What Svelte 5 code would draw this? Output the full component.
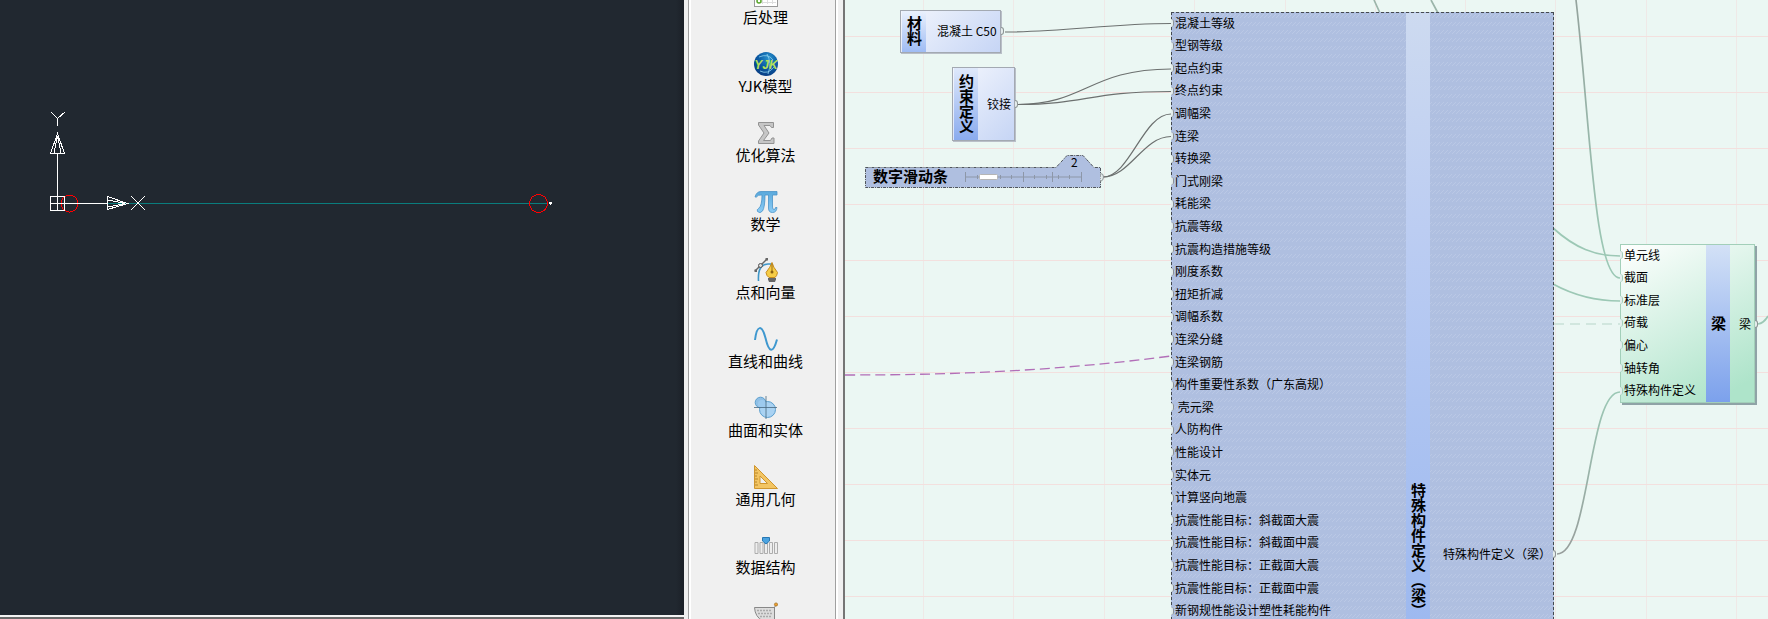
<script>
  const tools = [
    { id: 'post', label: '后处理' },
    { id: 'yjk', label: 'YJK模型' },
    { id: 'sigma', label: '优化算法' },
    { id: 'pi', label: '数学' },
    { id: 'pen', label: '点和向量' },
    { id: 'wave', label: '直线和曲线' },
    { id: 'solid', label: '曲面和实体' },
    { id: 'ruler', label: '通用几何' },
    { id: 'data', label: '数据结构' },
    { id: 'cart', label: '' }
  ];

  const beamInputs = [
    '混凝土等级', '型钢等级', '起点约束', '终点约束', '调幅梁', '连梁', '转换梁', '门式刚梁', '耗能梁',
    '抗震等级', '抗震构造措施等级', '刚度系数', '扭矩折减', '调幅系数', '连梁分缝', '连梁钢筋',
    '构件重要性系数（广东高规）', ' 壳元梁', '人防构件', '性能设计', '实体元', '计算竖向地震',
    '抗震性能目标：斜截面大震', '抗震性能目标：斜截面中震', '抗震性能目标：正截面大震',
    '抗震性能目标：正截面中震', '新钢规性能设计塑性耗能构件'
  ];

  const memberInputs = ['单元线', '截面', '标准层', '荷载', '偏心', '轴转角', '特殊构件定义'];

  const gridX = [78, 168, 259, 349, 440, 530, 620, 710, 801, 891];
  const gridY = [36, 92, 148, 204, 260, 316, 372, 428, 484, 540, 596];
  const ticks = [12, 23, 29, 35, 46, 58, 69, 81, 87, 93, 104];
</script>

<main class="app">
  <section class="cad" aria-label="CAD">
    <svg class="drawing" width="684" height="615" fill="none" shape-rendering="crispEdges">
      <path d="M107 203.5H548" stroke="#0a7d7d" />
      <g stroke="#f00">
        <circle cx="69.5" cy="203.5" r="8.5" />
        <circle cx="538.5" cy="203.5" r="9" />
      </g>
      <g stroke="#fff">
        <path d="M57.5 203V153M57 203.5H107" />
        <path d="M50.5 196.5h14v14h-14zM57.5 196v14M50 203.5h14" />
        <path d="M57.5 133.5L50.5 153.5H64.5ZM57.5 136L54 153M57.5 136L61 153" />
        <path d="M127.5 203.5L107.5 196.5V209.5ZM125 203.5L108 200M125 203.5L108 207" />
        <path d="M51 112L57.500 118.500L65 112M57.500 118V126" />
        <path d="M131 196L145 210M145 196L131 210" />
      </g>
      <path d="M549 202h3v2h-1v1h-1v-1h-1z" fill="#fff" />
    </svg>
    <div class="cad-foot"></div>
  </section>

  <nav class="sidebar">
    <div class="tools">
      {#each tools as tool}
        <button class="tool" aria-label={tool.label || tool.id}>
          <svg width="24" height="24" viewBox="0 0 24 24" fill="none">
            {#if tool.id === 'post'}
              <rect x=".5" y="0" width="23" height="23.500" fill="#fff" stroke="#999" />
              <path d="M3 19.500h19M8.500 16v5M13.500 16v5M18.500 16v5" stroke="#ddd" />
              <circle cx="5" cy="18" r="2" stroke="#5aa62c" stroke-width="1.500" />
            {:else if tool.id === 'yjk'}
              <defs>
                <radialGradient id="globe" cx=".6" cy=".25" r=".8">
                  <stop offset="0" stop-color="#2a93cc" />
                  <stop offset=".5" stop-color="#0b5ca6" />
                  <stop offset="1" stop-color="#083a80" />
                </radialGradient>
              </defs>
              <circle cx="12" cy="12" r="12" fill="url(#globe)" />
              <path d="M5 5Q14 1 19 8M6 19Q14 23 20 15M13 2Q18 11 14 22" stroke="#8fd0ee" stroke-width=".8" />
              <text x="12" y="17" text-anchor="middle" class="globe-text">YJK</text>
            {:else if tool.id === 'sigma'}
              <path d="M4.500 1.500H19.500V6.500H17.500L16 4.500H10L15 12L9.500 19.500H16.500L18 17H20V22.500H4.500V20L10 12L4.500 4Z" fill="#c6c6c6" stroke="#929292" />
            {:else if tool.id === 'pi'}
              <defs>
                <linearGradient id="piFill" x2="0" y2="1">
                  <stop stop-color="#5aa9dc" />
                  <stop offset="1" stop-color="#8bccf6" />
                </linearGradient>
              </defs>
              <path d="M1 7Q2.500 1.500 7 1.500H23V5H18.500V17Q18.500 19.500 20 19.500Q21.500 19.500 21.500 17.500H23Q22.500 22.500 18.500 22.500Q14.500 22.500 14.500 18V5H11Q11 17 8.500 21Q6 24 3.500 21.500Q2.500 19.500 4.500 18.500Q8 16 8 5Q3.500 4.500 2.500 7Z" fill="url(#piFill)" stroke="#4a93c8" stroke-width=".8" />
            {:else if tool.id === 'pen'}
              <path d="M4.500 23Q3.500 6 14 6H18" stroke="#3f96c8" stroke-width="1.600" />
              <path d="M1 13L13 1" stroke="#666" stroke-width="1.400" />
              <circle cx="6.500" cy="7.500" r="2" fill="#ddd" stroke="#555" />
              <path d="M.500 11.500h2.500v2.500H.500zM11.500 0H14v2.500h-2.500z" fill="#666" />
              <path d="M18 4.500Q19 9 23.500 14.500Q23 18 21 19.500H15Q12.500 18 12 14.500Q16.500 9 18 4.500Z" fill="#f6cc45" stroke="#c58a1c" />
              <path d="M18 6V14" stroke="#9a6c14" />
              <circle cx="18" cy="14" r="1.500" fill="#8a6010" />
              <path d="M14 20h8v1.500l-1 2.500h-6l-1-2.500z" fill="#666" />
            {:else if tool.id === 'wave'}
              <path d="M1 13C3 -3 8 -2 11.500 11C15 26 19 27 23 12.500" stroke="#3f98cf" stroke-width="2" />
            {:else if tool.id === 'solid'}
              <circle cx="6.500" cy="6.500" r="5.300" fill="#8fc0e6" stroke="#5c9fce" />
              <circle cx="13.500" cy="13.500" r="8" fill="#a9d2f2" stroke="#5c9fce" />
              <circle cx="8" cy="8" r="4" fill="#9dcaee" />
              <path d="M12 0V23M0 11.500H23" stroke="#47677f" stroke-width=".8" />
            {:else if tool.id === 'ruler'}
              <path fill-rule="evenodd" d="M.500 .500L23.500 23.500H.500ZM6 11V18.500H13.500Z" fill="#f3c563" stroke="#cf962f" />
              <path d="M1 5h2M1 8h3M1 11h2M1 14h3M1 17h2M1 20h3" stroke="#a8761c" stroke-width=".8" />
            {:else if tool.id === 'data'}
              <path d="M1 9.500h3v11H1zM6 9.500h3v11H6zM10.500 9.500h3v11h-3zM15.500 9.500h3v11h-3zM20.500 9.500h3v11h-3z" fill="#eee" stroke="#adadad" />
              <path d="M8.500 4.500h7v3.500l-3.500 3l-3.500-3z" fill="#4ba3e0" stroke="#2878b4" />
            {:else}
              <path d="M.500 5.500H20.500V19H9Q1 15 .500 5.500Z" fill="#ddd" stroke="#888" />
              <path d="M3 8.500H18M4 11.500H18M6 14.500H18" stroke="#aaa" stroke-width="1.500" stroke-dasharray="2 1" />
              <path d="M20.500 20V5L23 2.500" stroke="#888" />
              <circle cx="22" cy="2.500" r="1.600" fill="#f0a030" stroke="#9a6c20" stroke-width=".7" />
              <path d="M8 19Q13 17 17 19V24H2Q4 20 8 19Z" fill="#8b8b8b" />
            {/if}
          </svg>
          <span>{tool.label}</span>
        </button>
      {/each}
    </div>
  </nav>

  <section class="canvas" aria-label="节点图">
    <svg class="wires" width="923" height="619" fill="none">
      <defs>
        <linearGradient id="outWire" gradientUnits="userSpaceOnUse" x1="712" y1="554" x2="760" y2="392">
          <stop stop-color="#979d9b" />
          <stop offset="1" stop-color="#9cc8b5" />
        </linearGradient>
        <linearGradient id="topWire" gradientUnits="userSpaceOnUse" x1="0" y1="0" x2="0" y2="260">
          <stop stop-color="#94a39d" />
          <stop offset="1" stop-color="#9cc8b5" />
        </linearGradient>
      </defs>
      {#each gridX as x}
        <line x1={x + 0.5} x2={x + 0.5} y1="0" y2="100%" stroke="#efe9e7" />
      {/each}
      {#each gridY as y}
        <line x1="0" x2="100%" y1={y + 0.5} y2={y + 0.5} stroke="#f3e0de" />
      {/each}
      <g stroke="#6c706f" stroke-width="1.200">
        <path d="M160 32C220 32 265 23.500 326 23.500" />
        <path d="M173 104.500C240 104.500 245 69 326 69" />
        <path d="M173 104.500C240 104.500 245 91.500 326 91.500" />
        <path d="M258 177C285 177 298 114 326 114" />
        <path d="M258 177C285 177 298 136.500 326 136.500" />
      </g>
      <path d="M0 375C110 375 210 371 326 356" stroke="#b26fb8" stroke-width="1.300" stroke-dasharray="10 5" />
      <g stroke-width="1.700" stroke="#9cc8b5">
        <path d="M529 0L535 13M586 0L593 13" stroke="#9bb5aa" />
        <path d="M731 0C745 120 749 278 775 278" stroke="url(#topWire)" />
        <path d="M708 228C730 248 750 256 775 256" />
        <path d="M708 284C730 296 750 301 775 301" />
        <path d="M709 324H775" stroke="#c9e1d7" stroke-dasharray="10 6" />
        <path d="M712 554C745 554 743 392 775 392" stroke="url(#outWire)" />
        <path d="M913 324Q919 323 923 316" />
      </g>
    </svg>

    <article class="node material">
      <h2>材料</h2>
      <p class="out">混凝土 C50</p>
    </article>

    <article class="node support">
      <h2>约束定义</h2>
      <p class="out">铰接</p>
    </article>

    <article class="slider">
      <svg class="slider-shape" width="242" height="34">
        <path d="M.500 12.500H191L202 .500H218L229 12.500H235.500V32.500H.500Z" fill="#afbfe0" stroke="#50555c" stroke-dasharray="3 1 1 1" />
        <path d="M235.500 18.500Q238.500 18.500 238.500 22T235.500 26.500" fill="#e4ecec" stroke="#8d9494" />
      </svg>
      <h2>数字滑动条</h2>
      <svg class="track" width="117" height="12" stroke="#8d97a8">
        <path d="M0 6H116M.500 1V11M58.500 1V11M87.500 1V11M116.500 1V11" />
        {#each ticks as t}
          <path d="M{t + 0.5} 4V8" />
        {/each}
        <rect x="14.500" y="3.500" width="18" height="5" rx="1" fill="#fff" stroke="#b5b5b5" />
      </svg>
      <output>2</output>
    </article>

    <article class="node special">
      <svg class="hatch" width="100%" height="100%">
        <defs>
          <pattern id="hatch" width="4" height="8" patternUnits="userSpaceOnUse">
            <path d="M0 5L4 1" stroke="#bccae6" stroke-width=".8" />
          </pattern>
        </defs>
        <rect width="100%" height="100%" fill="url(#hatch)" />
      </svg>
      <ul>
        {#each beamInputs as name}
          <li>{name}</li>
        {/each}
      </ul>
      <h2>特殊构件定义（梁）</h2>
      <p class="out">特殊构件定义（梁）</p>
    </article>

    <article class="node member">
      <ul>
        {#each memberInputs as name}
          <li>{name}</li>
        {/each}
      </ul>
      <h2>梁</h2>
      <p class="out">梁</p>
    </article>
  </section>
</main>

<style>
  :global(body) {
    margin: 0;
    overflow: hidden;
  }

  .app {
    display: grid;
    grid-template-columns: minmax(0, 684fr) 161px minmax(0, 923fr);
    height: 100vh;
    overflow: hidden;
    color: #000;
    background: #f0f0f0;
    font: 12px/16px "Noto Sans CJK SC", sans-serif;
  }

  .cad {
    display: flex;
    flex-direction: column;
    min-height: 0;
    overflow: hidden;
    background: linear-gradient(to left, #1b2027, #212830 8px);
  }
  .drawing {
    flex: 1;
    min-height: 0;
  }
  .cad-foot {
    flex: none;
    height: 2px;
    border-top: 2px solid #f4f4f4;
    background: #6a6a6a;
  }

  .sidebar {
    display: flex;
    min-height: 0;
    padding: 0 5px 0 4px;
    border-right: 2px solid #757575;
    overflow: hidden;
  }
  .tools {
    flex: 1;
    display: grid;
    grid-auto-rows: 69px 69px 69px 68px;
    align-content: start;
    box-sizing: border-box;
    margin-top: -17px;
    padding-left: 6px;
    border-left: 1px solid #a0a0a0;
    border-right: 2px solid #fff;
    box-shadow: inset 2px 0 #fff, inset -1px 0 #a0a0a0;
  }
  .tool {
    display: flex;
    flex-direction: column;
    align-items: center;
    padding: 0;
    border: 0;
    background: none;
    color: inherit;
    font: 15px/20px "Noto Sans CJK SC", sans-serif;
    white-space: nowrap;
  }
  .tool svg {
    flex: none;
  }
  .globe-text {
    font: italic bold 12px "Liberation Sans", sans-serif;
    fill: #b4e05a;
  }

  .canvas {
    position: relative;
    overflow: hidden;
    background: #ebf7f3;
  }
  .wires {
    position: absolute;
    inset: 0;
  }

  h2,
  p,
  ul {
    margin: 0;
    padding: 0;
  }
  h2 {
    font-size: 15px;
    line-height: 24px;
    font-weight: 700;
  }
  .node {
    position: absolute;
    box-sizing: border-box;
    display: flex;
    border: 1px solid #a3a9b2;
    white-space: nowrap;
  }
  .node h2 {
    width: 24px;
    writing-mode: vertical-rl;
    text-align: center;
    background: linear-gradient(#eaf1fd, #9fbcf4);
  }
  .out {
    position: relative;
    align-self: center;
  }
  .out::after {
    content: "";
    position: absolute;
    top: 4px;
    left: calc(100% + var(--edge));
    width: 3px;
    height: 8px;
    box-sizing: border-box;
    border: solid #8d9494;
    border-width: 1px 1px 1px 0;
    border-radius: 0 3px 3px 0;
    background: #e4ecec;
  }

  .material,
  .support {
    padding-left: 1px;
    background: linear-gradient(135deg, #f3f6fd, #c6d5f5);
    box-shadow: 1px 1px #b9bfc8;
  }
  .material {
    --edge: 4px;
    left: 55px;
    top: 10px;
    height: 43px;
  }
  .material h2,
  .material .out {
    padding-bottom: 2px;
  }
  .material .out {
    padding-left: 11px;
    margin-right: 3px;
  }
  .support {
    --edge: 4px;
    left: 107px;
    top: 67px;
    height: 74px;
  }
  .support h2 {
    background: linear-gradient(#dfe9fb, #8aabee);
  }
  .support .out {
    padding-left: 9px;
    margin-right: 3px;
  }

  .slider {
    position: absolute;
    left: 20px;
    top: 155px;
    display: flex;
    align-items: center;
    gap: 17px;
    height: 20px;
    padding: 12px 20px 2px 8px;
  }
  .slider h2 {
    position: relative;
    line-height: 20px;
    padding-bottom: 2px;
  }
  .slider-shape {
    position: absolute;
    left: 0;
    top: 0;
  }
  .track {
    position: relative;
  }
  .slider output {
    position: absolute;
    left: 206px;
    top: -1px;
  }

  .special {
    --edge: 2px;
    left: 326px;
    top: 12px;
    width: 383px;
    height: 1083px;
    border: 1px dashed #454a50;
    background: #afbfe0;
  }
  .hatch {
    position: absolute;
    inset: 0;
  }
  .node ul {
    position: relative;
    display: grid;
    grid-auto-rows: 23px 22px 23px 22px 23px;
    align-content: start;
    margin-top: -2px;
    list-style: none;
  }
  .special ul {
    width: 234px;
  }
  .node li {
    position: relative;
    display: flex;
    align-items: center;
    padding-left: 3px;
    white-space: pre;
  }
  .node li::before {
    content: "";
    position: absolute;
    left: -1px;
    top: 8px;
    width: 3px;
    height: 8px;
    box-sizing: border-box;
    border-right: 1px solid #8b9197;
    border-radius: 0 3px 3px 0;
    background: #e4eeee;
  }
  .special h2 {
    position: relative;
    padding-bottom: 6px;
    background: linear-gradient(#cddaf0, #bccdf2 20%, #a0bbf0 52%, #86a6ea);
  }
  .special .out {
    margin-left: auto;
    margin-right: 2px;
  }

  .member {
    --edge: 4px;
    left: 775px;
    top: 244px;
    border: 1px solid #a2cfb9;
    background: linear-gradient(150deg, #fff, #aee4ca 90%);
    box-shadow: 2px 2px #8fa3a6;
  }
  .member ul {
    width: 85px;
    padding-bottom: 1px;
  }
  .node.member li::before {
    border-color: #a2cfb9;
  }
  .member h2 {
    background: linear-gradient(#d3e1f6, #7ca1ec);
  }
  .member .out {
    padding-left: 9px;
    margin-right: 3px;
  }
</style>
